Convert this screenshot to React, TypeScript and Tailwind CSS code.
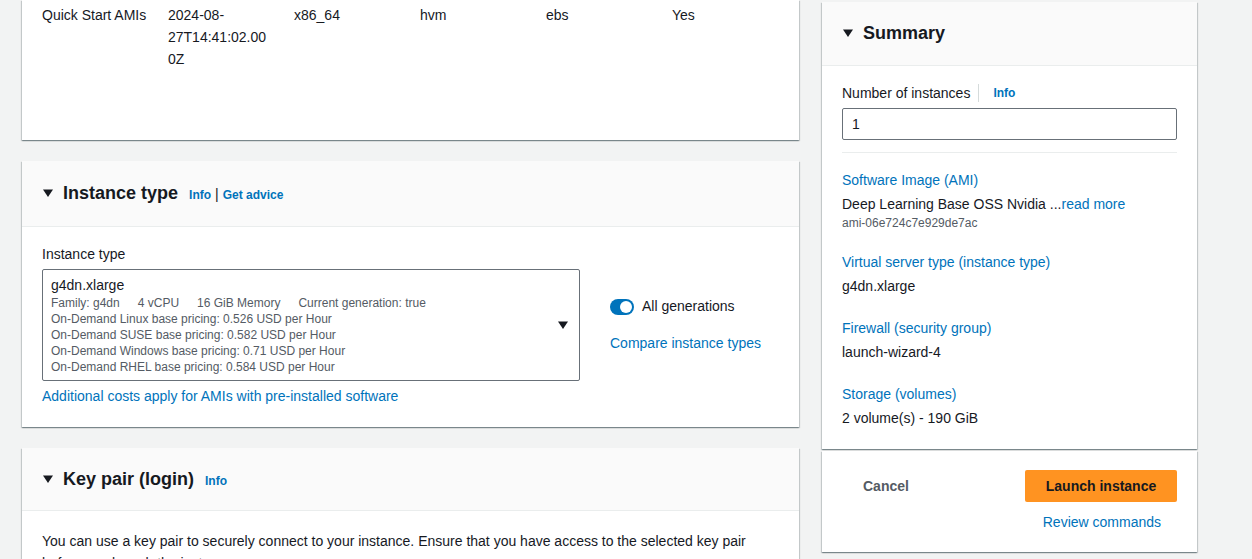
import React from "react";

const font = { fontFamily: '"Liberation Sans", Arial, sans-serif' };

function Caret({ className = "" }: { className?: string }) {
  return (
    <svg width="12" height="10" viewBox="0 0 12 10" className={className}>
      <path d="M1 1.5 L11 1.5 L6 9 Z" fill="#16191f" />
    </svg>
  );
}

function Info({ className = "" }: { className?: string }) {
  return <span className={"text-[12px] font-bold text-[#0073bb] " + className}>Info</span>;
}

const cardShadow =
  "shadow-[0_1px_1px_0_rgba(0,28,36,0.3),1px_1px_1px_0_rgba(0,28,36,0.15),-1px_1px_1px_0_rgba(0,28,36,0.15)]";

export default function App() {
  const amiRow = ["Quick Start AMIs", "2024-08-27T14:41:02.000Z", "x86_64", "hvm", "ebs", "Yes"];
  const pricing = [
    "On-Demand Linux base pricing: 0.526 USD per Hour",
    "On-Demand SUSE base pricing: 0.582 USD per Hour",
    "On-Demand Windows base pricing: 0.71 USD per Hour",
    "On-Demand RHEL base pricing: 0.584 USD per Hour",
  ];
  const summary = [
    { label: "Virtual server type (instance type)", value: "g4dn.xlarge" },
    { label: "Firewall (security group)", value: "launch-wizard-4" },
    { label: "Storage (volumes)", value: "2 volume(s) - 190 GiB" },
  ];

  return (
    <div
      className="h-[559px] w-[1252px] overflow-hidden bg-[#f2f3f3] text-[14px] text-[#16191f]"
      style={font}
    >
      <div className="flex gap-[23px] pl-[22px]">
        {/* left column */}
        <div className="flex w-[777px] flex-col gap-[21px]">
          <div className={"h-[140px] bg-white " + cardShadow}>
            <div className="flex pl-[20px] pt-[4px] leading-[22px]">
              {amiRow.map((cell, i) => (
                <div key={i} className="w-[126px] shrink-0 whitespace-nowrap">
                  {i === 1 ? (
                    <div className="w-[102px] whitespace-normal [overflow-wrap:anywhere]">{cell}</div>
                  ) : (
                    cell
                  )}
                </div>
              ))}
            </div>
          </div>

          <div className={"bg-white " + cardShadow}>
            <div className="flex h-[66px] items-center border-b border-[#eaeded] bg-[#fafafa] pl-[20px]">
              <Caret className="mr-[9px] mt-[-1px]" />
              <span className="text-[18px] font-bold">Instance type</span>
              <Info className="ml-[11px] mt-[3px]" />
              <span className="mx-[4px] mt-[2px] text-[14px]">|</span>
              <span className="mt-[3px] text-[12px] font-bold text-[#0073bb]">Get advice</span>
            </div>
            <div className="px-[20px] pb-[21px] pt-[16px]">
              <div className="mb-[4px] leading-[22px]">Instance type</div>
              <div className="flex">
                <div className="relative h-[112px] w-[538px] rounded-[2px] border border-[#687078] px-[8px] pt-[5px]">
                  <div className="leading-[20px]">g4dn.xlarge</div>
                  <div className="flex gap-[18px] text-[12px] leading-[16px] text-[#545b64]">
                    <span>Family: g4dn</span>
                    <span>4 vCPU</span>
                    <span>16 GiB Memory</span>
                    <span>Current generation: true</span>
                  </div>
                  {pricing.map((p) => (
                    <div key={p} className="text-[12px] leading-[16px] text-[#545b64]">
                      {p}
                    </div>
                  ))}
                  <Caret className="absolute right-[10px] top-[50px]" />
                </div>
                <div className="ml-[30px] pt-[27px]">
                  <div className="flex items-center gap-[8px]">
                    <div className="flex h-[16px] w-[24px] items-center justify-end rounded-full bg-[#0073bb] pr-[2px]">
                      <div className="h-[12px] w-[12px] rounded-full bg-white" />
                    </div>
                    <span>All generations</span>
                  </div>
                  <div className="mt-[16px] text-[#0073bb]">Compare instance types</div>
                </div>
              </div>
              <div className="mt-[5px] leading-[20px] text-[#0073bb]">
                Additional costs apply for AMIs with pre-installed software
              </div>
            </div>
          </div>

          <div className={"bg-white " + cardShadow}>
            <div className="flex h-[63px] items-center border-b border-[#eaeded] bg-[#fafafa] pl-[20px]">
              <Caret className="mr-[9px] mt-[-1px]" />
              <span className="text-[18px] font-bold">Key pair (login)</span>
              <Info className="ml-[11px] mt-[3px]" />
            </div>
            <div className="px-[20px] pt-[19px] leading-[22px]">
              You can use a key pair to securely connect to your instance. Ensure that you have access to the
              selected key pair before you launch the instance.
            </div>
          </div>
        </div>

        {/* right column */}
        <div className="flex w-[375px] flex-col gap-[2px] pt-[2px]">
          <div className={"bg-white " + cardShadow}>
            <div className="flex h-[64px] items-center border-b border-[#eaeded] bg-[#fafafa] pl-[20px]">
              <Caret className="mr-[9px] mt-[-1px]" />
              <span className="text-[18px] font-bold">Summary</span>
            </div>
            <div className="px-[20px] pb-[20px] pt-[16px]">
              <div className="flex items-center leading-[22px]">
                <span>Number of instances</span>
                <span className="mx-[8px] h-[18px] w-px bg-[#d5dbdb]" />
                <Info className="ml-[6px]" />
              </div>
              <div className="mt-[4px] flex h-[32px] items-center rounded-[2px] border border-[#687078] px-[9px]">
                1
              </div>
              <div className="mt-[12px] border-t border-[#eaeded] pt-[16px]">
                <div className="leading-[22px] text-[#0073bb]">Software Image (AMI)</div>
                <div className="mt-[2px] leading-[22px]">
                  Deep Learning Base OSS Nvidia ...<span className="text-[#0073bb]">read more</span>
                </div>
                <div className="text-[12px] leading-[16px] text-[#545b64]">ami-06e724c7e929de7ac</div>
              </div>
              {summary.map((s) => (
                <div key={s.label} className="mt-[20px]">
                  <div className="leading-[22px] text-[#0073bb]">{s.label}</div>
                  <div className="mt-[2px] leading-[22px]">{s.value}</div>
                </div>
              ))}
            </div>
          </div>
          <div className={"h-[101px] bg-white px-[20px] pt-[19px] " + cardShadow}>
            <div className="flex items-center justify-between">
              <span className="ml-[21px] font-bold text-[#545b64]">Cancel</span>
              <div className="flex h-[32px] w-[152px] items-center justify-center rounded-[2px] bg-[#ff9321] font-bold">
                Launch instance
              </div>
            </div>
            <div className="mt-[10px] flex justify-end pr-[16px] text-[#0073bb]">Review commands</div>
          </div>
        </div>
      </div>
    </div>
  );
}
